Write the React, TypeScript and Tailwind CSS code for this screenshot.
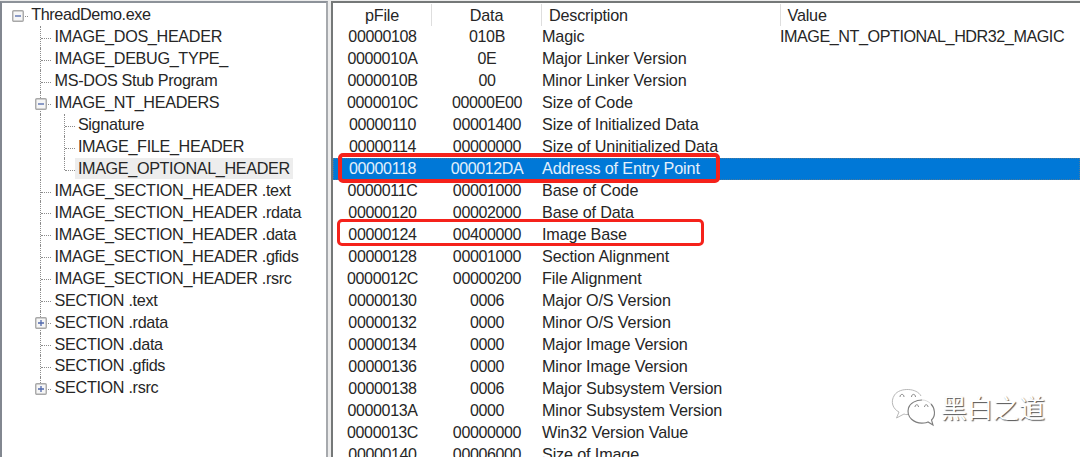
type Branch = "root" | "leaf" | "minus" | "plus";
type Guide = "none" | "full" | "half";

interface TreeItem {
  label: string;
  level: number;
  kind: Branch;
  last?: boolean;
  selected?: boolean;
}

const tree: TreeItem[] = [
  { label: "ThreadDemo.exe", level: 0, kind: "root" },
  { label: "IMAGE_DOS_HEADER", level: 1, kind: "leaf" },
  { label: "IMAGE_DEBUG_TYPE_", level: 1, kind: "leaf" },
  { label: "MS-DOS Stub Program", level: 1, kind: "leaf" },
  { label: "IMAGE_NT_HEADERS", level: 1, kind: "minus" },
  { label: "Signature", level: 2, kind: "leaf" },
  { label: "IMAGE_FILE_HEADER", level: 2, kind: "leaf" },
  { label: "IMAGE_OPTIONAL_HEADER", level: 2, kind: "leaf", last: true, selected: true },
  { label: "IMAGE_SECTION_HEADER .text", level: 1, kind: "leaf" },
  { label: "IMAGE_SECTION_HEADER .rdata", level: 1, kind: "leaf" },
  { label: "IMAGE_SECTION_HEADER .data", level: 1, kind: "leaf" },
  { label: "IMAGE_SECTION_HEADER .gfids", level: 1, kind: "leaf" },
  { label: "IMAGE_SECTION_HEADER .rsrc", level: 1, kind: "leaf" },
  { label: "SECTION .text", level: 1, kind: "leaf" },
  { label: "SECTION .rdata", level: 1, kind: "plus" },
  { label: "SECTION .data", level: 1, kind: "leaf" },
  { label: "SECTION .gfids", level: 1, kind: "leaf" },
  { label: "SECTION .rsrc", level: 1, kind: "plus", last: true },
];

const rows: [string, string, string, string?][] = [
  ["00000108", "010B", "Magic", "IMAGE_NT_OPTIONAL_HDR32_MAGIC"],
  ["0000010A", "0E", "Major Linker Version"],
  ["0000010B", "00", "Minor Linker Version"],
  ["0000010C", "00000E00", "Size of Code"],
  ["00000110", "00001400", "Size of Initialized Data"],
  ["00000114", "00000000", "Size of Uninitialized Data"],
  ["00000118", "000012DA", "Address of Entry Point"],
  ["0000011C", "00001000", "Base of Code"],
  ["00000120", "00002000", "Base of Data"],
  ["00000124", "00400000", "Image Base"],
  ["00000128", "00001000", "Section Alignment"],
  ["0000012C", "00000200", "File Alignment"],
  ["00000130", "0006", "Major O/S Version"],
  ["00000132", "0000", "Minor O/S Version"],
  ["00000134", "0000", "Major Image Version"],
  ["00000136", "0000", "Minor Image Version"],
  ["00000138", "0006", "Major Subsystem Version"],
  ["0000013A", "0000", "Minor Subsystem Version"],
  ["0000013C", "00000000", "Win32 Version Value"],
  ["00000140", "00006000", "Size of Image"],
];

const SELECTED_ROW = "00000118";

function Toggle({ plus }: { plus: boolean }) {
  return (
    <svg className="block size-[12px] shrink-0" viewBox="0 0 12 12">
      <rect x="0.75" y="0.75" width="10.5" height="10.5" rx="1" fill="#f6f6f6" stroke="#a8a8a8" strokeWidth="1.4" />
      <path d={plus ? "M3 6h6M6 3v6" : "M3 6h6"} stroke="#5068ac" strokeWidth="1.3" fill="none" />
    </svg>
  );
}

function GuideCell({ guide, arm }: { guide: Guide; arm: boolean }) {
  return (
    <div className="flex h-full w-[23.3px] shrink-0 pl-[7px]">
      <div className={guide === "none" ? "w-px" : guide === "half" ? "h-[12px] w-px border-l border-dotted border-[#8c8c8c]" : "h-full w-px border-l border-dotted border-[#8c8c8c]"} />
      {arm && <div className="mt-[12px] h-px w-[10px] border-t border-dotted border-[#8c8c8c]" />}
    </div>
  );
}

function TreeRow({ item }: { item: TreeItem }) {
  const own: Guide = item.kind === "root" ? "none" : item.last ? "half" : "full";
  return (
    <div className="flex h-[21.95px] items-center">
      {item.level > 0 && <div className="w-[23.3px] shrink-0" />}
      {item.level > 1 && <GuideCell guide="full" arm={false} />}
      <GuideCell guide={own} arm />
      {item.kind !== "leaf" && (
        <div className="-ml-[21.5px] mr-[9.5px] mt-[2px]">
          <Toggle plus={item.kind === "plus"} />
        </div>
      )}
      <span
        className={
          item.selected
            ? "-ml-[5px] bg-[#ededed] px-[3px] leading-[21px] tracking-[-0.36px]"
            : item.kind === "root"
              ? "-ml-[2px] leading-[21px] tracking-[-0.42px]"
              : "-ml-[2px] leading-[21px] tracking-[-0.33px]"
        }
      >
        {item.label}
      </span>
    </div>
  );
}

function TreePane() {
  return (
    <aside className="h-full w-[328px] shrink-0 overflow-hidden border-x-2 border-t-2 border-l-[#828790] border-r-[#a6a9ad] border-t-[#8d9299] bg-white pl-[8px] pt-px text-[16.2px]">
      {tree.map((item) => (
        <TreeRow key={item.label} item={item} />
      ))}
    </aside>
  );
}

function HeaderRow() {
  return (
    <div className="flex h-[22px] shrink-0 items-center tracking-[-0.2px]">
      <div className="flex h-full w-[99px] items-center justify-center border-r border-[#dedede]">pFile</div>
      <div className="flex h-full w-[110px] items-center justify-center border-r border-[#dedede]">Data</div>
      <div className="flex h-full w-[238.5px] items-center border-r border-[#dedede] pl-[7px]">Description</div>
      <div className="pl-[7px]">Value</div>
    </div>
  );
}

function DetailPane() {
  return (
    <main className="relative h-full min-w-0 grow overflow-hidden border-l-2 border-t-2 border-[#757878] bg-white pt-px text-[16.2px]">
      <HeaderRow />
      {rows.map(([offset, data, description, value]) => (
        <div
          key={offset}
          className={
            offset === SELECTED_ROW
              ? "flex h-[21.97px] items-center bg-[#0078d7] text-[#e3f0fb] outline-1 -outline-offset-1 outline-dotted outline-[#4c7a9c]"
              : "flex h-[21.97px] items-center"
          }
        >
          <div className="w-[99px] shrink-0 text-center text-[16px] tracking-[-0.36px]">{offset}</div>
          <div className="w-[110px] shrink-0 text-center text-[16px] tracking-[-0.36px]">{data}</div>
          <div className="w-[238px] shrink-0 whitespace-nowrap tracking-[-0.15px]">{description}</div>
          <div className="whitespace-nowrap tracking-[-0.47px]">{value}</div>
        </div>
      ))}
      <div className="absolute left-[5px] top-[150px] h-[30px] w-[382px] rounded-[5px] border-4 border-[#f5221b]" />
      <div className="absolute left-[4px] top-[216px] h-[27px] w-[367px] rounded-[5px] border-[3px] border-[#f5221b]" />
    </main>
  );
}

function Watermark() {
  return (
    <div className="absolute left-[891px] top-[386px] flex items-center">
      <svg className="h-[42px] w-[46px]" viewBox="0 0 46 42" fill="none" stroke="#b0b0b0" strokeWidth="0.9">
        <path d="M30 10C26 2 9 1 3.500 9C-1 16 2 23 8 26L5.500 32L13 28C15 29 17 28.500 18 28" />
        <path d="M31 14C25 14 19 17 17.500 22C15 31 23 38 33 37C35 37 36 36.500 37 36L42 39L40.500 34C45 30 44 22 40 18" fill="white" stroke="#7d7d7d" strokeWidth="1.1" />
        <path d="M40 18C37 15 34 14 31 14" stroke="#d5d5d5" />
        <path d="M9 11C9 7.500 13 7.500 13 11M20.500 11C20.500 7.500 24.500 7.500 24.500 11M24 21C24 18 27.500 18 27.500 21M33.500 21C33.500 18 37 18 37 21" stroke="#7d7d7d" />
      </svg>
      <span className="ml-[4px] whitespace-nowrap font-['Noto_Sans_CJK_SC',sans-serif] text-[26px] leading-[40px] text-white [text-shadow:1px_1px_1px_#555]">
        黑白之道
      </span>
    </div>
  );
}

export default function App() {
  return (
    <div className="relative flex h-[457px] w-[1080px] overflow-hidden bg-[#ececec] pt-px font-['Liberation_Sans',Arial,sans-serif] leading-[21px] text-[#262626]">
      <TreePane />
      <div className="w-[3px] shrink-0" />
      <DetailPane />
      <Watermark />
    </div>
  );
}
